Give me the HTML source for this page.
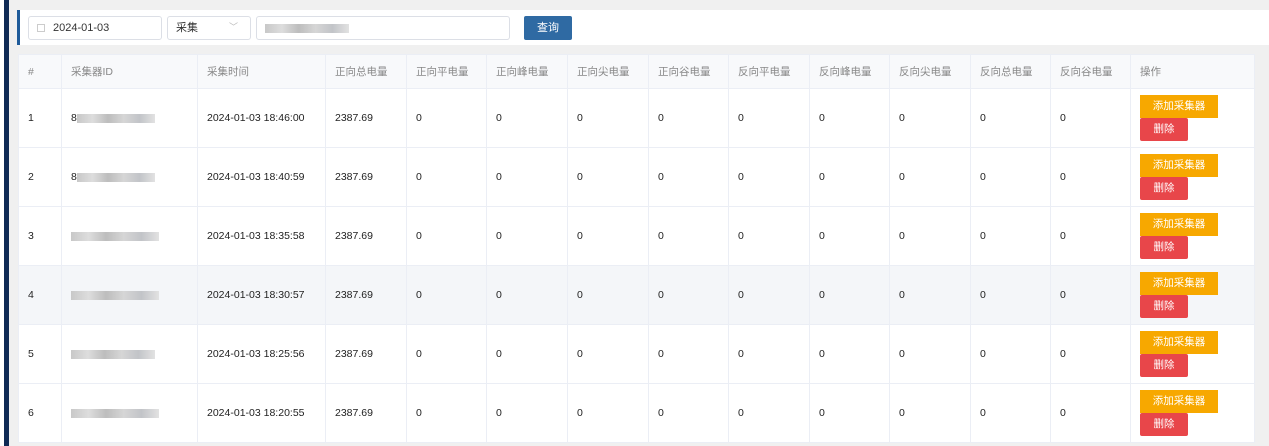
<!DOCTYPE html><html style="width:1269px;height:446px;overflow:hidden"><head><meta charset="utf-8"><style>
*{box-sizing:border-box;margin:0;padding:0}
body{width:1269px;height:446px;overflow:hidden;background:#f0f0f0;font-family:"Liberation Sans","Noto Sans CJK SC",sans-serif;font-size:11px;color:#333;position:relative}
.lb{position:absolute;left:4px;top:0;width:5px;height:446px;background:#0f2a55}
.lw{position:absolute;left:0;top:0;width:4px;height:446px;background:#fff}
.tool{position:absolute;left:17px;top:10px;width:1252px;height:35px;background:#fff;border-left:3px solid #1e5a99}
.in{position:absolute;top:6px;height:24px;border:1px solid #dcdfe6;border-radius:3px;background:#fff;line-height:22px;padding-left:8px;font-size:11px}
.btn{position:absolute;left:504px;top:6px;width:48px;height:24px;background:#2f6aa3;color:#fff;border-radius:2px;text-align:center;line-height:24px;font-size:11px}
.blur{display:inline-block;height:9px;background:linear-gradient(90deg,#c8c8c8,#ddd 20%,#bdbdbd 40%,#d6d6d6 60%,#c2c4c8 80%,#e2e2e2);vertical-align:middle}
table{position:absolute;left:18px;top:54px;border-collapse:collapse;background:#fff;table-layout:fixed}
td,th{border:1px solid #ebeef5;padding-left:9px;text-align:left;white-space:nowrap;overflow:hidden}
th{height:34px;background:#f8f9fb;color:#888;font-weight:normal;font-size:10.5px}
td{height:59px;font-size:10.5px;color:#222}
tr.h td{background:#f4f6f9}
.a{display:block;width:78px;height:23px;background:#f7a800;color:#fff;text-align:center;line-height:23px;font-size:10.5px}
.d{display:block;width:48px;height:23px;background:#e8464a;color:#fff;text-align:center;line-height:23px;font-size:10.5px;border-radius:2px}
</style></head><body>
<div class="lw"></div><div class="lb"></div>
<div class="tool">
<div class="in" style="left:8px;width:134px"><span style="display:inline-block;width:8px;height:8px;border:1px solid #ccc;margin-right:8px;vertical-align:-1px"></span>2024-01-03</div>
<div class="in" style="left:147px;width:84px">采集<span style="position:absolute;right:12px;top:-1px;color:#bbb;font-size:9px">﹀</span></div>
<div class="in" style="left:236px;width:254px"><span class="blur" style="width:84px"></span></div>
<div class="btn">查询</div>
</div>
<table>
<colgroup><col style="width:43px"><col style="width:136px"><col style="width:128px"><col style="width:81px"><col style="width:80px"><col style="width:81px"><col style="width:81px"><col style="width:80px"><col style="width:81px"><col style="width:80px"><col style="width:81px"><col style="width:80px"><col style="width:80px"><col style="width:124px"></colgroup>
<tr><th>#</th><th>采集器ID</th><th>采集时间</th><th>正向总电量</th><th>正向平电量</th><th>正向峰电量</th><th>正向尖电量</th><th>正向谷电量</th><th>反向平电量</th><th>反向峰电量</th><th>反向尖电量</th><th>反向总电量</th><th>反向谷电量</th><th>操作</th></tr>
<tr><td>1</td><td>8<span class="blur" style="width:78px"></span></td><td>2024-01-03 18:46:00</td><td>2387.69</td><td>0</td><td>0</td><td>0</td><td>0</td><td>0</td><td>0</td><td>0</td><td>0</td><td>0</td><td><span class="a">添加采集器</span><span class="d">删除</span></td></tr>
<tr><td>2</td><td>8<span class="blur" style="width:78px"></span></td><td>2024-01-03 18:40:59</td><td>2387.69</td><td>0</td><td>0</td><td>0</td><td>0</td><td>0</td><td>0</td><td>0</td><td>0</td><td>0</td><td><span class="a">添加采集器</span><span class="d">删除</span></td></tr>
<tr><td>3</td><td><span class="blur" style="width:88px"></span></td><td>2024-01-03 18:35:58</td><td>2387.69</td><td>0</td><td>0</td><td>0</td><td>0</td><td>0</td><td>0</td><td>0</td><td>0</td><td>0</td><td><span class="a">添加采集器</span><span class="d">删除</span></td></tr>
<tr class="h"><td>4</td><td><span class="blur" style="width:88px"></span></td><td>2024-01-03 18:30:57</td><td>2387.69</td><td>0</td><td>0</td><td>0</td><td>0</td><td>0</td><td>0</td><td>0</td><td>0</td><td>0</td><td><span class="a">添加采集器</span><span class="d">删除</span></td></tr>
<tr><td>5</td><td><span class="blur" style="width:84px"></span></td><td>2024-01-03 18:25:56</td><td>2387.69</td><td>0</td><td>0</td><td>0</td><td>0</td><td>0</td><td>0</td><td>0</td><td>0</td><td>0</td><td><span class="a">添加采集器</span><span class="d">删除</span></td></tr>
<tr><td>6</td><td><span class="blur" style="width:88px"></span></td><td>2024-01-03 18:20:55</td><td>2387.69</td><td>0</td><td>0</td><td>0</td><td>0</td><td>0</td><td>0</td><td>0</td><td>0</td><td>0</td><td><span class="a">添加采集器</span><span class="d">删除</span></td></tr>
</table>
</body></html>
